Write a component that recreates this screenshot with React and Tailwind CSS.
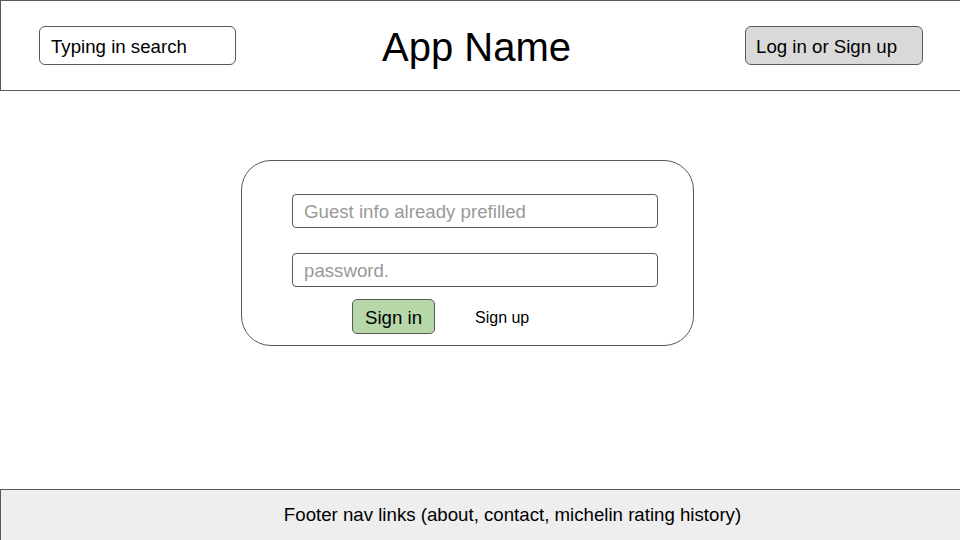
import React from "react";

function Header() {
  return (
    <header className="h-[91px] shrink-0 border-t border-b border-l border-[#595959] flex items-center pl-[38px] pr-[37px]">
      <div className="w-[197px] h-[39px] border border-[#595959] rounded-[6px] flex items-center pl-[11px] pt-[2px] text-[18.67px] text-black">
        Typing in search
      </div>
      <h1 className="ml-[146px] mt-[2px] text-[40px] leading-none text-black">App Name</h1>
      <button className="ml-auto w-[178px] h-[39px] bg-[#d9d9d9] border border-[#595959] rounded-[6px] flex items-center pl-[10px] pt-[2px] text-[18.67px] text-black">
        Log in or Sign up
      </button>
    </header>
  );
}

function LoginCard() {
  return (
    <div className="w-[453px] h-[186px] border border-[#595959] rounded-[30px] pt-[33px] pl-[50px]">
      <input
        className="block w-[366px] h-[34px] border border-[#595959] rounded-[4px] pl-[11px] pt-[1px] text-[18.67px] outline-none placeholder:text-[#999999]"
        placeholder="Guest info already prefilled"
      />
      <input
        type="password"
        className="block mt-[25px] w-[366px] h-[34px] border border-[#595959] rounded-[4px] pl-[11px] pt-[1px] text-[18.67px] outline-none placeholder:text-[#999999]"
        placeholder="password."
      />
      <div className="mt-[12px] flex items-center pl-[60px]">
        <button className="w-[83px] h-[35px] bg-[#b6d7a8] border border-[#595959] rounded-[5px] pt-[2px] text-[18.67px] text-black">
          Sign in
        </button>
        <a className="ml-[40px] mt-[3px] text-[16px] text-black cursor-pointer">Sign up</a>
      </div>
    </div>
  );
}

export default function App() {
  return (
    <div className="h-screen w-full flex flex-col overflow-hidden bg-white font-['Liberation_Sans',Arial,sans-serif]">
      <Header />
      <main className="flex-1 pt-[69px] pl-[241px]">
        <LoginCard />
      </main>
      <footer className="h-[51px] shrink-0 border-t border-l border-[#595959] bg-[#eeeeee] flex items-center justify-center pl-[64px] text-[18.67px] text-black">
        Footer nav links (about, contact, michelin rating history)
      </footer>
    </div>
  );
}
